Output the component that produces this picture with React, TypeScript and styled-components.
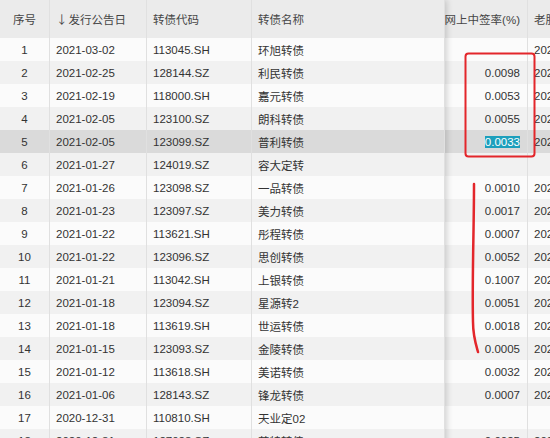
import React from 'react';
import styled, { createGlobalStyle } from 'styled-components';

const GlobalStyle = createGlobalStyle`
  html, body {
    margin: 0;
    padding: 0;
    background: #ffffff;
  }
  body {
    font-family: "Liberation Sans", Arial, "Noto Sans CJK SC", sans-serif;
    font-size: 11.5px;
    color: #333333;
  }
`;

const Screen = styled.div`
  position: relative;
  width: 550px;
  height: 438px;
  overflow: hidden;
  background: #ffffff;
`;

const Table = styled.div`
  display: flex;
  align-items: flex-start;
`;

const Pane = styled.div<{ $frozen?: boolean }>`
  flex: none;
  position: relative;
  z-index: ${(p) => (p.$frozen ? 1 : 0)};
  box-shadow: ${(p) => (p.$frozen ? '2px 0 6px rgba(0, 0, 0, 0.16)' : 'none')};
`;

const HeaderRow = styled.div<{ $cols: string }>`
  display: grid;
  grid-template-columns: ${(p) => p.$cols};
  height: 38px;
  background: #ebebeb;
  color: #454545;
`;

const Row = styled.div<{ $cols: string; $even: boolean; $selected: boolean }>`
  display: grid;
  grid-template-columns: ${(p) => p.$cols};
  height: 23px;
  background: ${(p) => (p.$selected ? '#dadada' : p.$even ? '#f1f1f1' : '#fbfbfb')};
`;

const Cell = styled.div<{ $align?: 'left' | 'center' | 'right'; $last?: boolean }>`
  display: flex;
  align-items: center;
  justify-content: ${(p) =>
    p.$align === 'center' ? 'center' : p.$align === 'right' ? 'flex-end' : 'flex-start'};
  padding: 0 7px 0 ${(p) => (p.$align === 'center' ? '7px' : '6px')};
  border-right: ${(p) => (p.$last ? 'none' : '1px solid #e0e0e0')};
  white-space: nowrap;
  overflow: hidden;
  box-sizing: border-box;
`;

const SortArrow = styled.span`
  font-family: "Noto Sans CJK SC", sans-serif;
  margin-right: 1px;
`;

const Selected = styled.span`
  background: #1d9fbc;
  color: #ffffff;
`;

const Marks = styled.svg`
  position: absolute;
  left: 0;
  top: 0;
  pointer-events: none;
  z-index: 2;
`;

type Bond = [string, string, string, string, string];

const rows: Bond[] = [
  ['2021-03-02', '113045.SH', '环旭转债', '', '202'],
  ['2021-02-25', '128144.SZ', '利民转债', '0.0098', '202'],
  ['2021-02-19', '118000.SH', '嘉元转债', '0.0053', '202'],
  ['2021-02-05', '123100.SZ', '朗科转债', '0.0055', '202'],
  ['2021-02-05', '123099.SZ', '普利转债', '0.0033', '202'],
  ['2021-01-27', '124019.SZ', '容大定转', '', ''],
  ['2021-01-26', '123098.SZ', '一品转债', '0.0010', '202'],
  ['2021-01-23', '123097.SZ', '美力转债', '0.0017', '202'],
  ['2021-01-22', '113621.SH', '彤程转债', '0.0007', '202'],
  ['2021-01-22', '123096.SZ', '思创转债', '0.0052', '202'],
  ['2021-01-21', '113042.SH', '上银转债', '0.1007', '202'],
  ['2021-01-18', '123094.SZ', '星源转2', '0.0051', '202'],
  ['2021-01-18', '113619.SH', '世运转债', '0.0018', '202'],
  ['2021-01-15', '123093.SZ', '金陵转债', '0.0005', '202'],
  ['2021-01-12', '113618.SH', '美诺转债', '0.0032', '202'],
  ['2021-01-06', '128143.SZ', '锋龙转债', '0.0007', '202'],
  ['2020-12-31', '110810.SH', '天业定02', '', ''],
  ['2020-12-31', '127028.SZ', '英特转债', '0.0025', '202'],
];

const LEFT_COLS = '50px 97px 105px 193px';
const RIGHT_COLS = '83px 120px';
const SELECTED_ROW = 4;

function App() {
  return (
    <Screen>
      <GlobalStyle />
      <Table>
        <Pane $frozen>
          <HeaderRow $cols={LEFT_COLS}>
            <Cell $align="center">序号</Cell>
            <Cell>
              <SortArrow>↓</SortArrow>发行公告日
            </Cell>
            <Cell>转债代码</Cell>
            <Cell>转债名称</Cell>
          </HeaderRow>
          {rows.map((r, i) => (
            <Row key={i} $cols={LEFT_COLS} $even={i % 2 === 1} $selected={i === SELECTED_ROW}>
              <Cell $align="center">{i + 1}</Cell>
              <Cell>{r[0]}</Cell>
              <Cell>{r[1]}</Cell>
              <Cell>{r[2]}</Cell>
            </Row>
          ))}
        </Pane>
        <Pane>
          <HeaderRow $cols={RIGHT_COLS}>
            <Cell $align="right">网上中签率(%)</Cell>
            <Cell $last>老股东配售日期</Cell>
          </HeaderRow>
          {rows.map((r, i) => (
            <Row key={i} $cols={RIGHT_COLS} $even={i % 2 === 1} $selected={i === SELECTED_ROW}>
              <Cell $align="right">
                {i === SELECTED_ROW ? <Selected>{r[3]}</Selected> : r[3]}
              </Cell>
              <Cell $last>{r[4]}</Cell>
            </Row>
          ))}
        </Pane>
      </Table>
      {/* red hand-drawn annotations on top of the screenshot */}
      <Marks width="550" height="438" viewBox="0 0 550 438">
        <rect x="465.5" y="53.5" width="69" height="103" rx="3" fill="none" stroke="#e3262b" strokeWidth="2" />
        <path
          d="M474 184 C474 230 472 280 473 322 C473 336 476 345 478 352"
          fill="none"
          stroke="#e3262b"
          strokeWidth="2.5"
          strokeLinecap="round"
        />
      </Marks>
    </Screen>
  );
}

export default App;
